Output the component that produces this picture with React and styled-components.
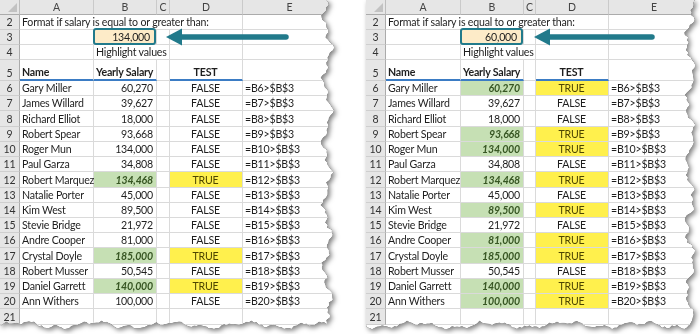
import React from 'react';
import styled, { createGlobalStyle } from 'styled-components';

const Global = createGlobalStyle`
  html, body { margin: 0; padding: 0; background: #fff; }
  body { font-family: Lato, "Open Sans", sans-serif; }
`;

const TEAL = '#217a8b';
const ROW_H = 15.23;

const Page = styled.div`
  display: flex;
  gap: 29px;
  width: 700px;
  height: 334px;
  overflow: hidden;
`;

const Shadow = styled.div`
  filter: drop-shadow(0 0 0.6px rgba(0, 0, 0, 0.95)) drop-shadow(2px 2px 2.5px rgba(0, 0, 0, 0.5));
  height: 334px;
`;

const Sheet = styled.div`
  position: relative;
  width: ${(p) => p.$w}px;
  height: 332px;
  background: #fff;
  display: grid;
  grid-template-columns: 20px ${(p) => p.$a}px 63px ${(p) => p.$c}px 73px 1fr;
  grid-template-rows: 15px 15px 15px 15px 21px repeat(16, ${ROW_H}px);
  align-content: start;
  font-family: Lato, "Open Sans", sans-serif;
  font-size: 10.6px;
  letter-spacing: -0.2px;
  color: #1e1e1e;
`;

const Corner = styled.div`
  background: #e6e6e6;
  border-right: 1px solid #bdbdbd;
  border-bottom: 1px solid #ababab;
  position: relative;
  &::after {
    content: '';
    position: absolute;
    right: 2px;
    bottom: 2px;
    border-style: solid;
    border-width: 0 0 9px 9px;
    border-color: transparent transparent #c2c2c2 transparent;
  }
`;

const ColHead = styled.div`
  background: #e6e6e6;
  border-right: 1px solid #cacaca;
  border-bottom: 1px solid #ababab;
  color: #444;
  display: flex;
  align-items: center;
  justify-content: center;
  font-size: 10.5px;
  letter-spacing: 0;
`;

const RowNum = styled.div`
  background: #e6e6e6;
  border-right: 1px solid #ababab;
  border-bottom: 1px solid #cfcfcf;
  color: #333;
  display: flex;
  align-items: flex-end;
  justify-content: center;
  padding-bottom: 1px;
  font-size: 10.5px;
  letter-spacing: 0;
`;

const Cell = styled.div`
  grid-column: span ${(p) => p.$span || 1};
  border-right: 1px solid #dadada;
  border-bottom: ${(p) => (p.$blue ? '2px solid #3b7cc4' : '1px solid #dadada')};
  background: ${(p) => p.$fill || '#fff'};
  color: ${(p) => p.$color || '#1e1e1e'};
  font-weight: ${(p) => (p.$bold ? 700 : 400)};
  font-style: ${(p) => (p.$italic ? 'italic' : 'normal')};
  display: flex;
  align-items: flex-end;
  justify-content: ${(p) =>
    p.$align === 'right' ? 'flex-end' : p.$align === 'center' ? 'center' : 'flex-start'};
  padding: 0 3px 1px 2px;
  white-space: nowrap;
  overflow: visible;
  min-width: 0;
`;

const ValueBox = styled.div`
  flex: 1;
  align-self: stretch;
  margin: -2px -3px -2px -3px;
  border: 2px solid ${TEAL};
  border-radius: 3px;
  background: #fdebc8;
  display: flex;
  align-items: center;
  justify-content: flex-end;
  padding-right: 4px;
  color: #1e1e1e;
`;

const Arrow = styled.svg`
  position: absolute;
  top: 27px;
  left: ${(p) => p.$left}px;
`;

const data = [
  ['Gary Miller', 60270],
  ['James Willard', 39627],
  ['Richard Elliot', 18000],
  ['Robert Spear', 93668],
  ['Roger Mun', 134000],
  ['Paul Garza', 34808],
  ['Robert Marquez', 134468],
  ['Natalie Porter', 45000],
  ['Kim West', 89500],
  ['Stevie Bridge', 21972],
  ['Andre Cooper', 81000],
  ['Crystal Doyle', 185000],
  ['Robert Musser', 50545],
  ['Daniel Garrett', 140000],
  ['Ann Withers', 100000],
];

const fmt = (n) => n.toLocaleString('en-US');

function rng(seed) {
  let s = seed;
  return () => {
    s = (s * 16807) % 2147483647;
    return (s - 1) / 2147483646;
  };
}

function tornClip(w, h, seed) {
  const r = rng(seed * 9973 + 17);
  const pts = ['0px 0px'];
  for (let y = 0; y <= h - 10; y += 2.5) {
    const x =
      w - 10 + 3.6 * Math.sin(y / 10 + seed) + 2 * Math.sin(y / 3.3 + seed * 2) + (r() - 0.5) * 3;
    pts.push(`${x.toFixed(1)}px ${y}px`);
  }
  pts.push(`${w - 10}px ${h - 8}px`);
  for (let x = w - 13; x >= 0; x -= 2.5) {
    const y =
      h - 7 + 2.6 * Math.sin(x / 12 + seed) + 1.5 * Math.sin(x / 3.9 + seed) + (r() - 0.5) * 2.4;
    pts.push(`${x}px ${y.toFixed(1)}px`);
  }
  pts.push(`0px ${h - 7}px`);
  return `polygon(${pts.join(',')})`;
}

function Panel({ threshold, width, colA, colC, arrowLeft, arrowLen, seed }) {
  return (
    <Shadow>
      <Sheet $w={width} $a={colA} $c={colC} style={{ clipPath: tornClip(width, 332, seed) }}>
        <Corner />
        {['A', 'B', 'C', 'D', 'E'].map((c) => (
          <ColHead key={c}>{c}</ColHead>
        ))}

        <RowNum>2</RowNum>
        <Cell $span={4}>Format if salary is equal to or greater than:</Cell>
        <Cell />

        <RowNum>3</RowNum>
        <Cell />
        <Cell>
          <ValueBox>{fmt(threshold)}</ValueBox>
        </Cell>
        <Cell />
        <Cell />
        <Cell />

        <RowNum>4</RowNum>
        <Cell />
        <Cell $span={2}>Highlight values</Cell>
        <Cell />
        <Cell />

        <RowNum>5</RowNum>
        <Cell $bold $blue>Name</Cell>
        <Cell $bold $blue>Yearly Salary</Cell>
        <Cell />
        <Cell $bold $blue $align="center">TEST</Cell>
        <Cell />

        {data.map(([name, sal], i) => {
          const row = i + 6;
          const hit = sal > threshold;
          return (
            <React.Fragment key={name}>
              <RowNum>{row}</RowNum>
              <Cell>{name}</Cell>
              <Cell
                $align="right"
                $fill={hit ? '#c6e0b4' : undefined}
                $color={hit ? '#375623' : undefined}
                $bold={hit}
                $italic={hit}
              >
                {fmt(sal)}
              </Cell>
              <Cell />
              <Cell
                $align="center"
                $fill={hit ? '#fff04d' : undefined}
                $color={hit ? '#4d4500' : undefined}
              >
                {hit ? 'TRUE' : 'FALSE'}
              </Cell>
              <Cell>{`=B${row}>$B$3`}</Cell>
            </React.Fragment>
          );
        })}

        <RowNum>21</RowNum>
        <Cell />
        <Cell />
        <Cell />
        <Cell />
        <Cell />

        <Arrow $left={arrowLeft} width={arrowLen + 4} height="20" viewBox={`0 0 ${arrowLen + 4} 20`}>
          <line x1="14" y1="10" x2={arrowLen - 1} y2="10" stroke={TEAL} strokeWidth="5.5" strokeLinecap="round" />
          <polygon points="1,10 17,1.5 17,18.5" fill={TEAL} />
        </Arrow>
      </Sheet>
    </Shadow>
  );
}

export default function App() {
  return (
    <>
      <Global />
      <Page>
        <Panel threshold={134000} width={337} colA={74} colC={13} arrowLeft={165} arrowLen={122} seed={3} />
        <Panel threshold={60000} width={334} colA={75} colC={12} arrowLeft={167} arrowLen={120} seed={7} />
      </Page>
    </>
  );
}
